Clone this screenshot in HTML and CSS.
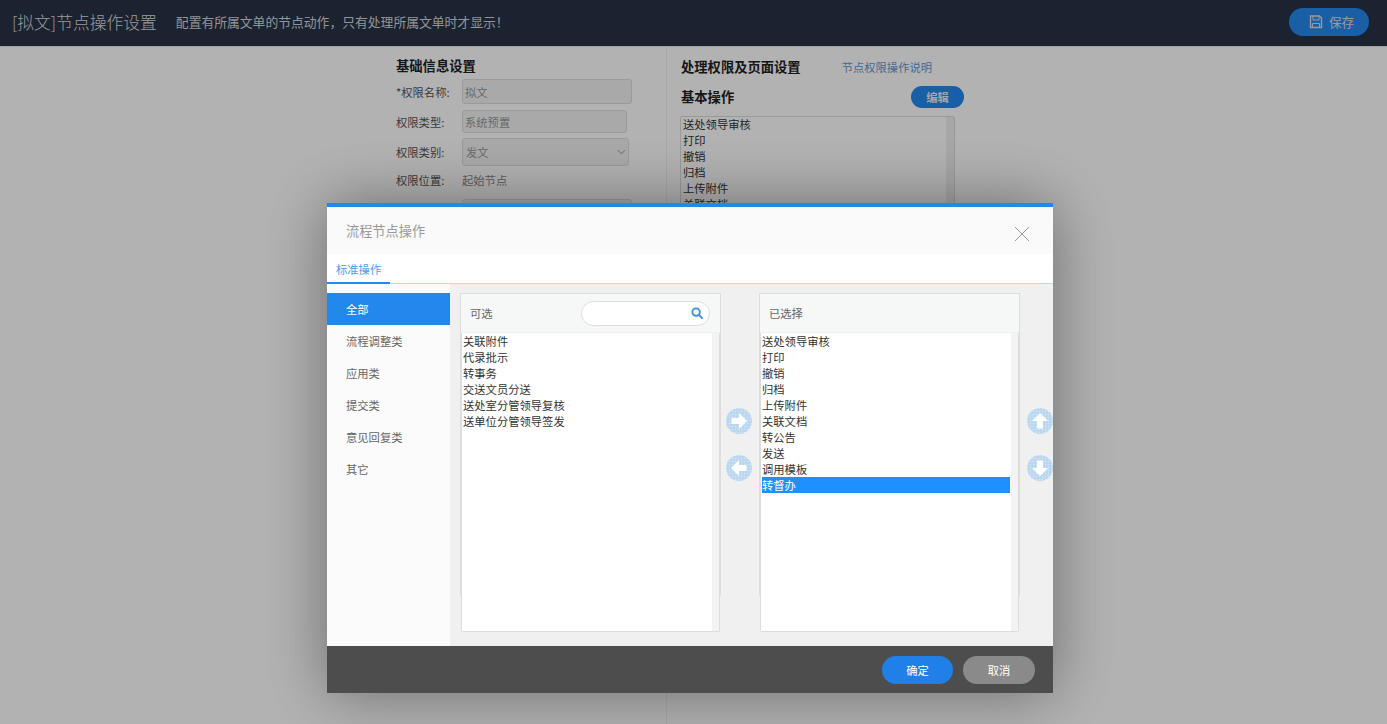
FILE: index.html
```html
<!DOCTYPE html>
<html lang="zh-CN">
  <head>
    <meta charset="UTF-8" />
    <title>节点操作设置</title>
    <link rel="stylesheet" href="styles.css">
  </head>
  <body>
    <div class="header">
      <div class="page-title">[拟文]节点操作设置</div>
      <div class="page-desc">配置有所属文单的节点动作，只有处理所属文单时才显示！</div>
      <button class="save-btn">
        <svg class="save-icon" viewBox="0 0 14 14" width="14" height="14">
          <path d="M1.500 1h9l2 2v9.500h-11z" fill="none" stroke="currentColor" stroke-width="1.400" />
          <path d="M4 1v4h6V1M3.500 12.500V8.500h7v4" fill="none" stroke="currentColor" stroke-width="1" />
        </svg>
        <span>保存</span>
      </button>
    </div>

    <div class="main">
      <div class="col-left">
        <h3 class="section-title">基础信息设置</h3>
        <div class="form-row row-name">
          <label>*权限名称:</label>
          <div class="field field-name">拟文</div>
        </div>
        <div class="form-row row-type">
          <label>权限类型:</label>
          <div class="field field-type">系统预置</div>
        </div>
        <div class="form-row row-cat">
          <label>权限类别:</label>
          <div class="field field-cat">
            发文
            <svg viewBox="0 0 10 6" width="9" height="6"><path d="M1 1l4 4 4-4" fill="none" stroke="#888" /></svg>
          </div>
        </div>
        <div class="form-row row-pos">
          <label>权限位置:</label>
          <span class="plain">起始节点</span>
        </div>
        <div class="form-row">
          <label></label>
          <div class="field field-name"></div>
        </div>
      </div>
      <div class="col-right">
        <div class="right-head">
          <h3 class="section-title">处理权限及页面设置</h3>
          <a class="help-link">节点权限操作说明</a>
        </div>
        <div class="ops-head">
          <h3 class="section-title">基本操作</h3>
          <button class="edit-btn">编辑</button>
        </div>
        <div class="ops-list">
          <div>送处领导审核</div>
          <div>打印</div>
          <div>撤销</div>
          <div>归档</div>
          <div>上传附件</div>
          <div>关联文档</div>
          <div>转公告</div>
          <div>发送</div>
        </div>
      </div>
    </div>

    <div class="mask"></div>

    <div class="dialog">
      <div class="dialog-head">
        <span>流程节点操作</span>
        <svg class="close-icon" viewBox="0 0 16 16" width="16" height="16">
          <path d="M1 1l14 14M15 1L1 15" stroke="#999" fill="none" />
        </svg>
      </div>
      <div class="tabs">
        <div class="tab active">标准操作</div>
      </div>
      <div class="dialog-body">
        <ul class="side-menu">
          <li class="active">全部</li>
          <li>流程调整类</li>
          <li>应用类</li>
          <li>提交类</li>
          <li>意见回复类</li>
          <li>其它</li>
        </ul>
        <div class="transfer">
          <div class="panel">
            <div class="panel-head">
              <span>可选</span>
              <div class="search">
                <svg viewBox="0 0 14 14" width="13" height="13">
                  <circle cx="5.500" cy="5.500" r="4" fill="none" stroke="#3d8fdc" stroke-width="2" />
                  <path d="M8.500 8.500l4 4" stroke="#3d8fdc" stroke-width="2.200" />
                </svg>
              </div>
            </div>
            <div class="item-list">
              <div>关联附件</div>
              <div>代录批示</div>
              <div>转事务</div>
              <div>交送文员分送</div>
              <div>送处室分管领导复核</div>
              <div>送单位分管领导签发</div>
            </div>
          </div>

          <div class="arrows">
            <svg class="arrow" viewBox="0 0 26 26"><use href="#disc" /><path d="M5.500 10h7.500V5l8 8-8 8v-5H5.500z" fill="#fff" /></svg>
            <svg class="arrow" viewBox="0 0 26 26"><use href="#disc" /><path d="M20.500 10H13V5l-8 8 8 8v-5h7.500z" fill="#fff" /></svg>
          </div>

          <div class="panel">
            <div class="panel-head">
              <span>已选择</span>
            </div>
            <div class="item-list">
              <div>送处领导审核</div>
              <div>打印</div>
              <div>撤销</div>
              <div>归档</div>
              <div>上传附件</div>
              <div>关联文档</div>
              <div>转公告</div>
              <div>发送</div>
              <div>调用模板</div>
              <div class="selected">转督办</div>
            </div>
          </div>

          <div class="arrows arrows-right">
            <svg class="arrow" viewBox="0 0 26 26"><use href="#disc" /><path d="M10 20.500V13H5l8-8 8 8h-5v7.500z" fill="#fff" /></svg>
            <svg class="arrow" viewBox="0 0 26 26"><use href="#disc" /><path d="M10 5.500V13H5l8 8 8-8h-5V5.500z" fill="#fff" /></svg>
          </div>
        </div>
      </div>
      <div class="dialog-foot">
        <button class="foot-btn ok">确定</button>
        <button class="foot-btn cancel">取消</button>
      </div>
    </div>

    <!-- shared dotted disc behind the four arrows -->
    <svg class="defs" width="0" height="0">
      <defs>
        <pattern id="dots" width="3" height="3" patternUnits="userSpaceOnUse">
          <rect width="3" height="3" fill="#bcd8f1" />
          <rect width="1" height="1" fill="#dce9f6" />
        </pattern>
        <g id="disc">
          <circle cx="13" cy="13" r="13" fill="url(#dots)" />
        </g>
      </defs>
    </svg>
  </body>
</html>
```

FILE: styles.css
```css
* {
  margin: 0;
  padding: 0;
  box-sizing: border-box;
}

body {
  font-family: "Noto Sans CJK SC", "Liberation Sans", sans-serif;
  font-size: 11.3px;
  line-height: 16px;
  color: #333;
  background: #fff;
  height: 724px;
  overflow: hidden;
}

button {
  font-family: inherit;
  border: none;
}

.header {
  height: 47px;
  background: #273246;
  border-bottom: 1px solid #e8e8e8;
  display: flex;
  align-items: center;
  padding: 0 18px 2px 12px;
  color: #fff;
}

.page-title {
  font-size: 16.8px;
  color: #ddd;
  font-weight: 300;
}

.page-desc {
  margin-left: 19px;
  font-size: 12.8px;
  color: #d4d4d4;
}

.save-btn {
  margin-left: auto;
  width: 80px;
  height: 28px;
  border-radius: 14px;
  background: #2388ee;
  color: #ddd;
  font-size: 12.6px;
  display: flex;
  align-items: center;
  padding: 0 0 1px 20px;
  gap: 6px;
}

.main {
  width: 595px;
  height: 677px;
  margin: 0 auto;
  display: flex;
}

.col-left {
  width: 270px;
  padding-top: 10px;
}

.col-right {
  flex: 1;
  border-left: 1px solid #f0f0f0;
  padding: 11px 0 0 14px;
}

.section-title {
  font-size: 13.3px;
  line-height: 18px;
  font-weight: 700;
  color: #222;
}

.form-row {
  display: flex;
  align-items: center;
  margin-top: 6px;
}

.form-row label {
  width: 66px;
  color: #555;
  flex-shrink: 0;
}

.col-left .section-title {
  margin-bottom: -2px;
}

.field {
  height: 25px;
  border: 1px solid #ddd;
  border-radius: 3px;
  background: #f2f2f2;
  color: #999;
  padding: 0 2px;
  display: flex;
  align-items: center;
}

.field-name {
  width: 170px;
}

.field-type {
  width: 165px;
  height: 23px;
}

.field-cat {
  width: 167px;
  height: 28px;
  justify-content: space-between;
  padding: 0 2px 0 3px;
}

.row-type {
  margin-top: 6px;
}

.row-cat {
  margin-top: 5px;
}

.row-pos {
  margin-top: 6px;
}

.row-pos + .form-row {
  margin-top: 11px;
}

.plain {
  color: #888;
}

.right-head {
  display: flex;
  align-items: center;
  gap: 41px;
}

.help-link {
  color: #5b9bd5;
}

.ops-head {
  width: 283px;
  margin-top: 10px;
  display: flex;
  align-items: center;
  justify-content: space-between;
}

.edit-btn {
  width: 53px;
  height: 22px;
  border-radius: 11px;
  background: #2388ee;
  color: #eee;
  font-size: 11.3px;
  font-weight: 700;
}

.ops-list {
  width: 275px;
  height: 130px;
  margin: 8px 0 0 -1px;
  border: 1px solid #ddd;
  border-radius: 2px;
  background: linear-gradient(to left, #efefef 8px, #fff 8px);
  padding: 0 2px;
  color: #333;
}

.ops-list div:first-child {
  margin-top: -1px;
}

.mask {
  position: fixed;
  inset: 0;
  background: rgba(0, 0, 0, 0.3);
}

.dialog {
  position: fixed;
  left: 327px;
  top: 203px;
  width: 726px;
  height: 490px;
  border-top: 4px solid #2388ee;
  background: #fff;
  display: flex;
  flex-direction: column;
  box-shadow: 0 0 60px rgba(0, 0, 0, 0.4);
}

.dialog-head {
  height: 47px;
  flex-shrink: 0;
  background: #fafafa;
  padding-left: 19px;
  display: flex;
  align-items: center;
  justify-content: space-between;
  font-size: 13.2px;
  color: #999;
}

.close-icon {
  margin: 6px 23px 0 0;
}

.tabs {
  height: 30px;
  flex-shrink: 0;
  background: #fff;
  border-bottom: 1px solid #bcdcf8;
  display: flex;
}

.tab {
  width: 63px;
  height: 30px;
  padding: 7px 0 0 9px;
}

.tab.active {
  color: #4a9df0;
  border-bottom: 2px solid #2388ee;
}

.dialog-body {
  flex: 1;
  display: flex;
  min-height: 0;
}

.side-menu {
  width: 123px;
  background: #fbfbfb;
  padding-top: 9px;
  list-style: none;
}

.side-menu li {
  height: 32px;
  line-height: 32px;
  padding-left: 19px;
  color: #666;
}

.side-menu li.active {
  background: #2388ee;
  color: #fff;
}

.transfer {
  flex: 1;
  background: #f0f0f0;
  padding: 9px 0 0 10px;
  display: flex;
}

.panel {
  width: 261px;
  height: 303px;
  border: 1px solid #ddd;
  background: #f0f0f0;
}

.panel-head {
  height: 38px;
  background: #f6f7f7;
  padding: 0 10px 0 9px;
  display: flex;
  align-items: center;
  justify-content: space-between;
  color: #666;
}

.search {
  width: 129px;
  height: 25px;
  background: #fff;
  border: 1px solid #ddd;
  border-radius: 13px;
  display: flex;
  align-items: center;
  justify-content: flex-end;
  padding-right: 5px;
}

.item-list {
  width: 259px;
  height: 299px;
  margin-top: 1px;
  background: linear-gradient(to left, #f3f3f3 7px, #fff 7px);
  border: 1px solid #ddd;
  border-top: none;
  border-radius: 0 0 2px 2px;
  padding: 0 8px 0 1px;
  color: #333;
}

.item-list div {
  height: 16px;
}

.item-list .selected {
  background: #1e90ff;
  color: #fff;
}

.arrows {
  width: 38px;
  padding: 115px 3px 0 0;
  display: flex;
  flex-direction: column;
  align-items: center;
  gap: 21px;
}

.arrows-right {
  width: 33px;
  padding: 115px 0 0 7px;
}

.arrow {
  width: 26px;
  height: 26px;
  flex-shrink: 0;
}

.dialog-foot {
  height: 47px;
  flex-shrink: 0;
  background: #4d4d4d;
  padding-right: 18px;
  display: flex;
  align-items: center;
  justify-content: flex-end;
  gap: 10px;
}

.foot-btn {
  width: 72px;
  height: 28px;
  border-radius: 14px;
  color: #fff;
  font-size: 11.3px;
}

.foot-btn.ok {
  width: 71px;
  background: #2080e8;
}

.foot-btn.cancel {
  background: #8a8a8a;
}

.defs {
  position: absolute;
}
```
